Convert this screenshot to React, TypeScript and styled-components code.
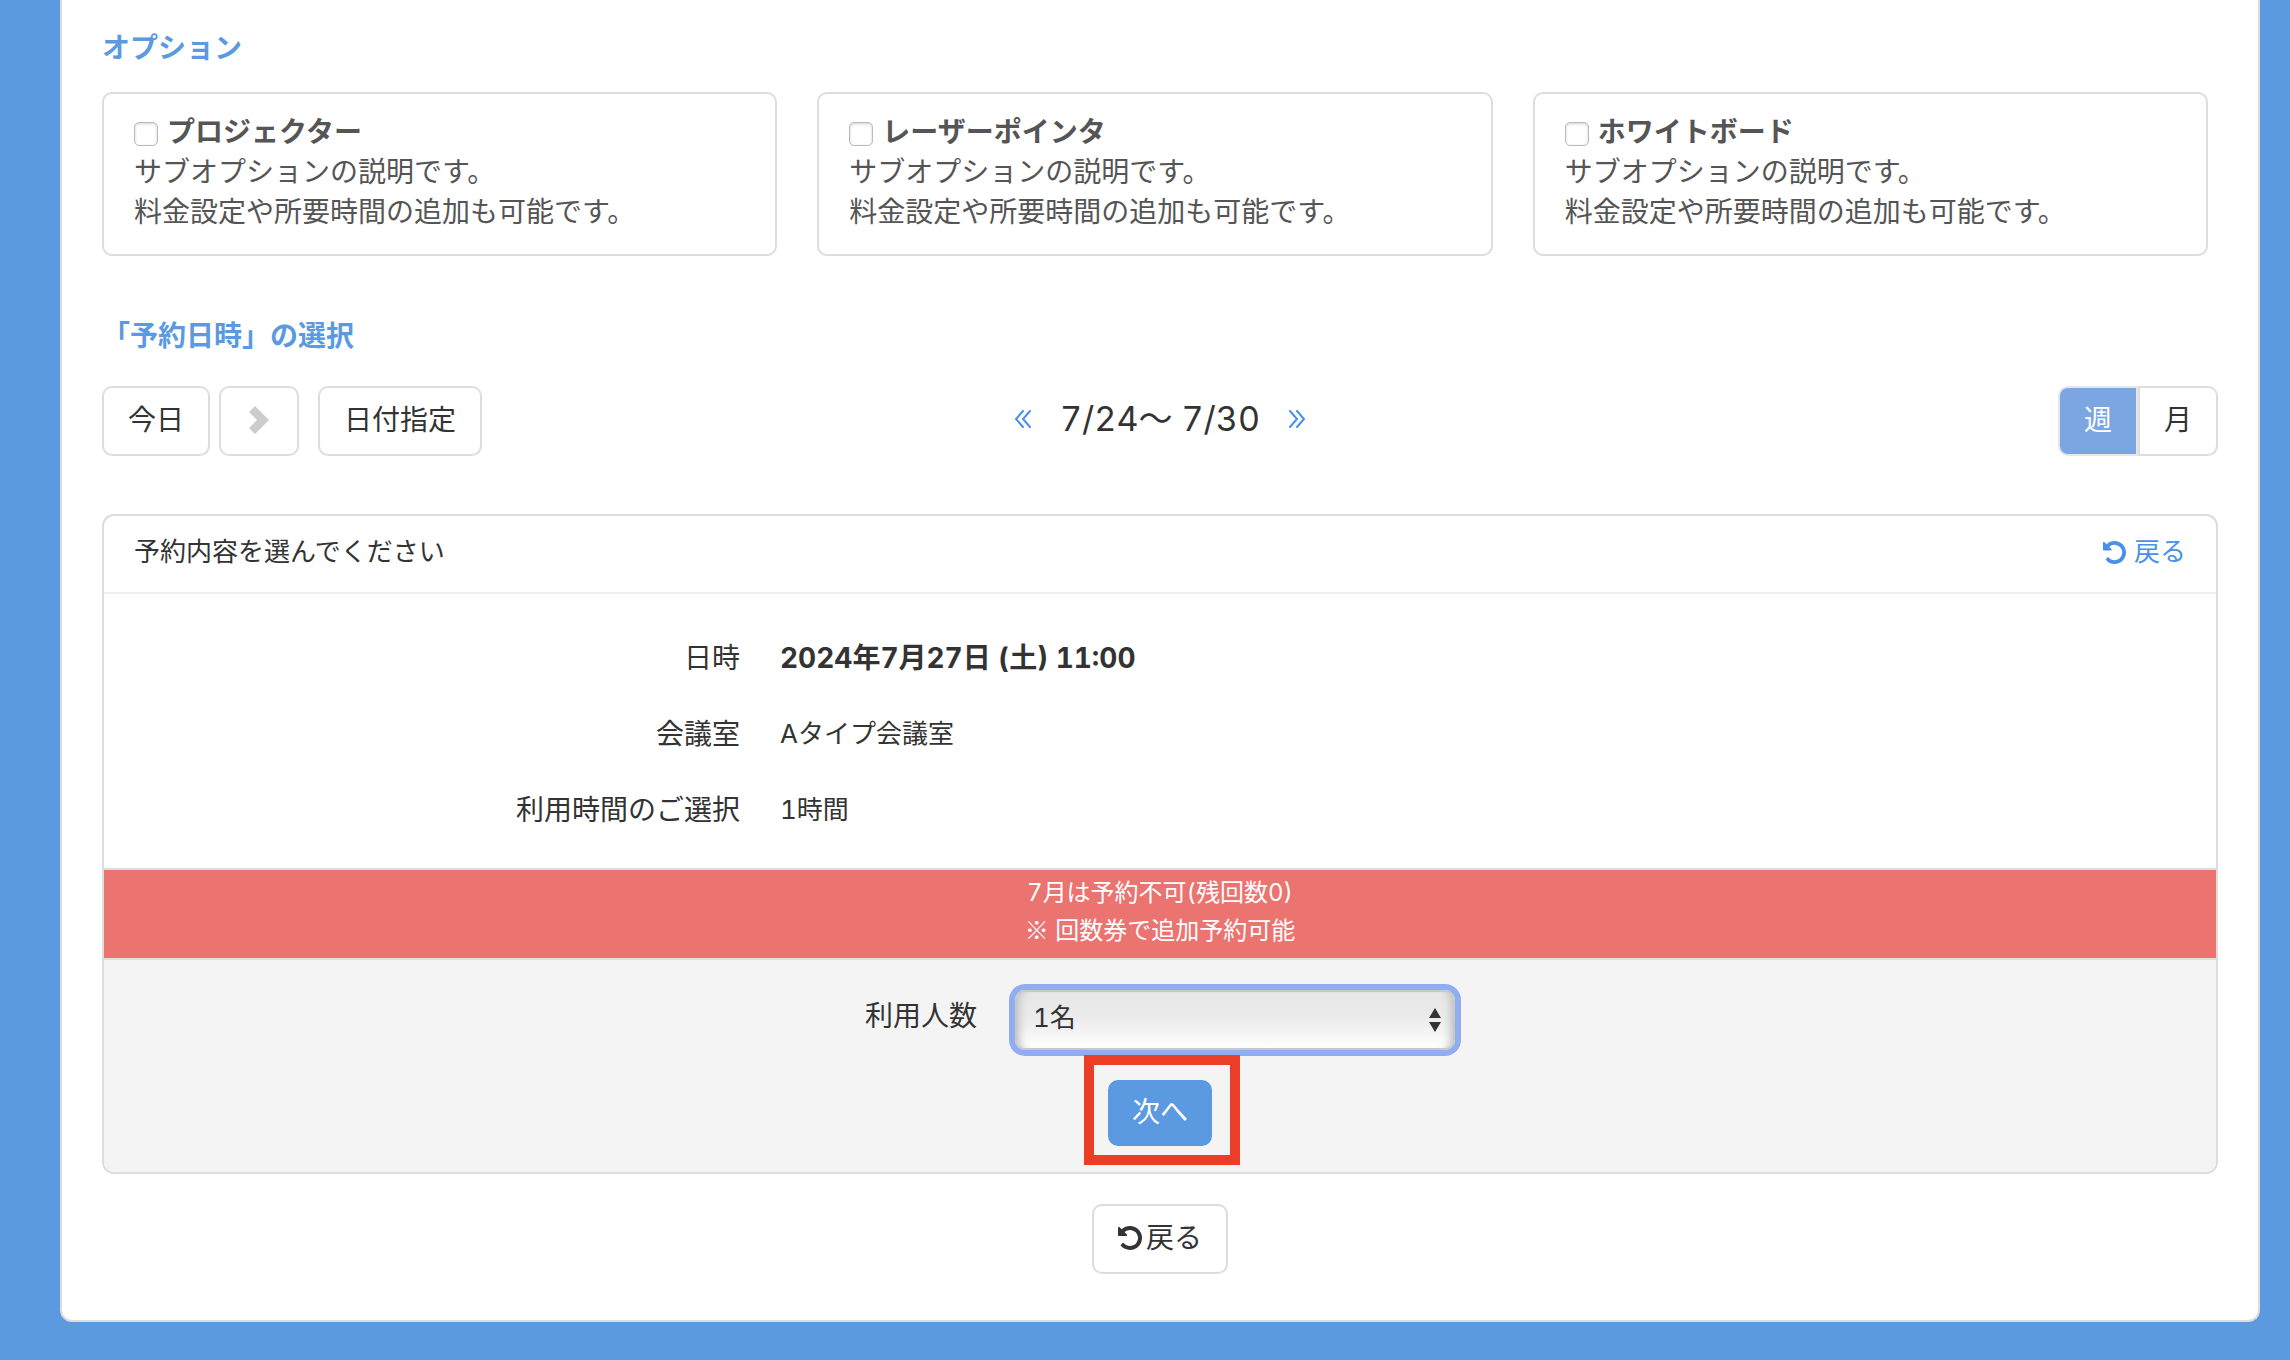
import React from 'react';
import styled, { createGlobalStyle, css } from 'styled-components';

const fontStack = "Inter, 'Noto Sans CJK JP', sans-serif";

const GlobalStyle = createGlobalStyle`
  *, *::before, *::after { box-sizing: border-box; }
  body {
    margin: 0;
    background: #5b99e0;
    color: #333;
    font-family: ${fontStack};
    font-size: 28px;
    line-height: 40px;
    font-variant-numeric: tabular-nums;
  }
  button, select, input { font-family: inherit; font-variant-numeric: inherit; }
`;

const Page = styled.main`
  margin: 0 30px 38px 60px;
  padding: 28px 40px 46px;
  background: #fff;
  border: 2px solid #ddd;
  border-top: 0;
  border-radius: 0 0 12px 12px;
`;

const Heading = styled.h2`
  margin: 0;
  color: #5b99e0;
  font-size: 28px;
  line-height: 40px;
  font-weight: 700;
`;

const OptionGrid = styled.div`
  display: grid;
  grid-template-columns: repeat(3, 1fr);
  gap: 40px;
  margin: 24px 10px 60px 0;
`;

const OptionCard = styled.label`
  display: block;
  padding: 18px 30px 22px;
  border: 2px solid #ddd;
  border-radius: 10px;
  color: #555;
`;

const OptionName = styled.span`
  display: flex;
  align-items: center;
  gap: 9px;
  font-weight: 700;
`;

const Checkbox = styled.input`
  appearance: none;
  flex: none;
  width: 24px;
  height: 24px;
  margin: 4px 0 0;
  border: 1px solid #bbb;
  border-radius: 5px;
  background: #fff;
  box-shadow: inset 0 1px 3px rgba(0, 0, 0, 0.18);
  &:checked { background: #5b99e0; }
`;

const OptionText = styled.span`
  display: block;
`;

const Toolbar = styled.div`
  display: grid;
  grid-template-columns: 1fr auto 1fr;
  align-items: center;
  margin: 30px 0 58px;
`;

const ToolGroup = styled.div`
  display: flex;
  align-items: center;
  gap: 9px;
`;

const ViewSwitch = styled.div`
  display: flex;
  justify-self: end;
`;

const Button = styled.button<{ $spaced?: boolean }>`
  display: inline-flex;
  align-items: center;
  justify-content: center;
  gap: 4px;
  height: 70px;
  min-width: 80px;
  margin: 0 0 0 ${(p) => (p.$spaced ? '10px' : '0')};
  padding: 0 24px 2px;
  border: 2px solid #ddd;
  border-radius: 10px;
  background: #fff;
  color: #333;
  font-size: 28px;
  line-height: 40px;
  cursor: pointer;
`;

const ViewButton = styled(Button)<{ $active?: boolean }>`
  border-radius: 0 10px 10px 0;
  ${(p) =>
    p.$active &&
    css`
      border-color: #e6e6e6;
      border-radius: 10px 0 0 10px;
      background: #7ba6e2;
      color: #fff;
    `}
`;

const Period = styled.div`
  display: flex;
  align-items: center;
  gap: 28px;
  padding-bottom: 4px;
  font-size: 34px;
  line-height: 48px;
`;

const IconLink = styled.a`
  display: flex;
  color: #4a90e8;
`;

const Booking = styled.section`
  overflow: hidden;
  border: 2px solid #ddd;
  border-radius: 12px;
`;

const BookingHeader = styled.header`
  display: flex;
  justify-content: space-between;
  padding: 16px 30px 20px;
  border-bottom: 2px solid #eee;
  font-size: 26px;
`;

const BackLink = styled.a`
  display: flex;
  align-items: center;
  gap: 8px;
  color: #4a90e8;
  text-decoration: none;
`;

const Details = styled.dl`
  display: grid;
  grid-template-columns: 636px 1fr;
  gap: 36px 40px;
  margin: 0;
  padding: 44px 0 38px;
`;

const Term = styled.dt`
  text-align: right;
`;

const Value = styled.dd<{ $strong?: boolean }>`
  margin: 0;
  font-size: ${(p) => (p.$strong ? '28px' : '26px')};
  font-weight: ${(p) => (p.$strong ? 700 : 400)};
`;

const Alert = styled.p`
  margin: 0;
  padding: 4px 0 8px;
  border: solid #ddd;
  border-width: 2px 0;
  background: #eb7370;
  color: #fff;
  font-size: 24px;
  line-height: 38px;
  text-align: center;
`;

const NoteMark = styled.span`
  font-family: 'Noto Sans CJK JP', sans-serif;
  line-height: 1;
`;

const BookingForm = styled.form`
  display: flex;
  flex-direction: column;
  align-items: center;
  gap: 30px;
  padding: 30px 32px 26px;
  background: #f4f4f4;
`;

const Field = styled.div`
  display: flex;
  align-items: center;
  gap: 38px;
`;

const FieldLabel = styled.label`
  padding-bottom: 8px;
`;

const SelectBox = styled.div`
  display: grid;
  align-items: center;
  width: 440px;
  & > * { grid-area: 1 / 1; }
`;

const Select = styled.select`
  appearance: none;
  width: 100%;
  height: 60px;
  padding: 0 20px 6px 16px;
  border: 2px solid #c8c8c8;
  border-radius: 10px;
  outline: none;
  background: linear-gradient(#e6e6e6, #ececec 50%, #fff);
  box-shadow: 0 0 0 6px #8fadf0, inset 10px 0 8px -8px #bbb, inset -10px 0 8px -8px #bbb;
  color: #333;
  font-size: 26px;
`;

const SelectArrows = styled.svg`
  justify-self: end;
  margin-right: 14px;
  pointer-events: none;
`;

const SubmitSpot = styled.div`
  position: relative;
`;

const SubmitButton = styled(Button)`
  height: 66px;
  padding: 0 22px 2px;
  border-color: #5b99e0;
  background: #5b99e0;
  color: #fff;
`;

const Highlight = styled.span`
  position: absolute;
  inset: -25px -28px -19px -24px;
  border: 10px solid #ea3f26;
  pointer-events: none;
`;

const Footer = styled.footer`
  display: flex;
  justify-content: center;
  margin-top: 30px;
`;

const UndoIcon = ({ size }: { size: number }) => (
  <svg width={size} height={size} viewBox="0 128 1536 1536" fill="currentColor" aria-hidden="true">
    <path d="M1536 896q0 156-61 298t-164 245-245 164-298 61q-172 0-327-72.5t-264-204.5q-7-10-6.5-22.5t8.5-20.5l137-138q10-9 25-9 16 2 23 12 73 95 179 147t225 52q104 0 198.5-40.5t163.5-109.5 109.5-163.5 40.5-198.5-40.5-198.5-109.5-163.5-163.5-109.5-198.5-40.5q-98 0-188 35.5t-160 101.5l137 138q31 30 14 69-17 40-59 40h-448q-26 0-45-19t-19-45v-448q0-42 40-59 39-17 69 14l130 129q107-101 244.5-156.5t284.5-55.5q156 0 298 61t245 164 164 245 61 298z" />
  </svg>
);

const ChevronIcon = () => (
  <svg width="20" height="28" viewBox="0 0 20 28" fill="#ccc" aria-hidden="true">
    <path d="M0 6 L6 0 L20 14 L6 28 L0 22 L8 14 Z" />
  </svg>
);

const DoubleAngle = ({ right }: { right?: boolean }) => (
  <svg width="18" height="18" viewBox="0 0 18 18" fill="none" stroke="currentColor" strokeWidth="2" strokeLinecap="round" aria-hidden="true">
    <path d={right ? 'M2 1 L9 9 L2 17 M9 1 L16 9 L9 17' : 'M9 1 L2 9 L9 17 M16 1 L9 9 L16 17'} />
  </svg>
);

const options = ['プロジェクター', 'レーザーポインタ', 'ホワイトボード'];

const details = [
  { term: '日時', value: '2024年7月27日 (土) 11:00', strong: true },
  { term: '会議室', value: 'Aタイプ会議室' },
  { term: '利用時間のご選択', value: '1時間' },
];

export default function App() {
  return (
    <>
      <GlobalStyle />
      <Page lang="ja">
        <Heading>オプション</Heading>
        <OptionGrid>
          {options.map((name) => (
            <OptionCard key={name}>
              <OptionName>
                <Checkbox type="checkbox" />
                {name}
              </OptionName>
              <OptionText>サブオプションの説明です。</OptionText>
              <OptionText>料金設定や所要時間の追加も可能です。</OptionText>
            </OptionCard>
          ))}
        </OptionGrid>

        <Heading>「予約日時」の選択</Heading>
        <Toolbar>
          <ToolGroup>
            <Button type="button">今日</Button>
            <Button type="button" aria-label="次の週">
              <ChevronIcon />
            </Button>
            <Button type="button" $spaced>日付指定</Button>
          </ToolGroup>
          <Period>
            <IconLink href="#prev" aria-label="前へ">
              <DoubleAngle />
            </IconLink>
            <span>7/24〜 7/30</span>
            <IconLink href="#next" aria-label="次へ">
              <DoubleAngle right />
            </IconLink>
          </Period>
          <ViewSwitch>
            <ViewButton type="button" $active>週</ViewButton>
            <ViewButton type="button">月</ViewButton>
          </ViewSwitch>
        </Toolbar>

        <Booking>
          <BookingHeader>
            <span>予約内容を選んでください</span>
            <BackLink href="#back">
              <UndoIcon size={23} />
              戻る
            </BackLink>
          </BookingHeader>
          <Details>
            {details.map((d) => (
              <React.Fragment key={d.term}>
                <Term>{d.term}</Term>
                <Value $strong={d.strong}>{d.value}</Value>
              </React.Fragment>
            ))}
          </Details>
          <Alert>
            7月は予約不可(残回数0)
            <br />
            <NoteMark>※</NoteMark> 回数券で追加予約可能
          </Alert>
          <BookingForm onSubmit={(e) => e.preventDefault()}>
            <Field>
              <FieldLabel htmlFor="people">利用人数</FieldLabel>
              <SelectBox>
                <Select id="people" defaultValue="1">
                  <option value="1">1名</option>
                  <option value="2">2名</option>
                </Select>
                <SelectArrows width="12" height="24" viewBox="0 0 12 24" fill="#333" aria-hidden="true">
                  <path d="M0 10 L6 0 L12 10 Z M0 14 L6 24 L12 14 Z" />
                </SelectArrows>
              </SelectBox>
            </Field>
            <SubmitSpot>
              <SubmitButton type="submit">次へ</SubmitButton>
              <Highlight />
            </SubmitSpot>
          </BookingForm>
        </Booking>

        <Footer>
          <Button type="button">
            <UndoIcon size={24} />
            戻る
          </Button>
        </Footer>
      </Page>
    </>
  );
}
